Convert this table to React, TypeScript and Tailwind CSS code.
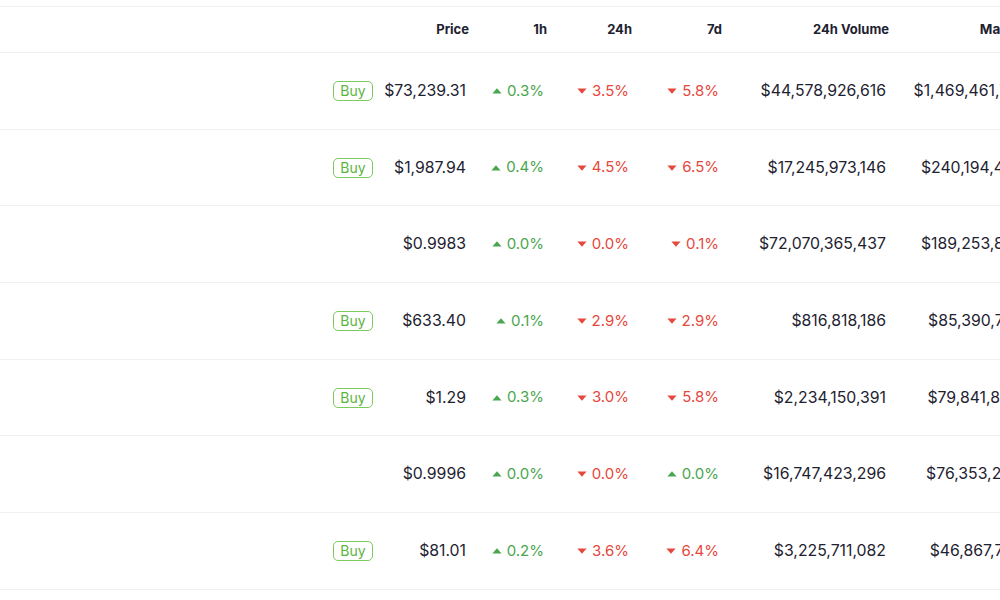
import React from "react";

type Change = { v: string; up: boolean };

const rows: {
  buy: boolean;
  price: string;
  h1: Change;
  h24: Change;
  d7: Change;
  volume: string;
  cap: string;
}[] = [
  { buy: true, price: "$73,239.31", h1: { v: "0.3%", up: true }, h24: { v: "3.5%", up: false }, d7: { v: "5.8%", up: false }, volume: "$44,578,926,616", cap: "$1,469,461,742,118" },
  { buy: true, price: "$1,987.94", h1: { v: "0.4%", up: true }, h24: { v: "4.5%", up: false }, d7: { v: "6.5%", up: false }, volume: "$17,245,973,146", cap: "$240,194,418,583" },
  { buy: false, price: "$0.9983", h1: { v: "0.0%", up: true }, h24: { v: "0.0%", up: false }, d7: { v: "0.1%", up: false }, volume: "$72,070,365,437", cap: "$189,253,810,476" },
  { buy: true, price: "$633.40", h1: { v: "0.1%", up: true }, h24: { v: "2.9%", up: false }, d7: { v: "2.9%", up: false }, volume: "$816,818,186", cap: "$85,390,726,415" },
  { buy: true, price: "$1.29", h1: { v: "0.3%", up: true }, h24: { v: "3.0%", up: false }, d7: { v: "5.8%", up: false }, volume: "$2,234,150,391", cap: "$79,841,852,963" },
  { buy: false, price: "$0.9996", h1: { v: "0.0%", up: true }, h24: { v: "0.0%", up: false }, d7: { v: "0.0%", up: true }, volume: "$16,747,423,296", cap: "$76,353,256,724" },
  { buy: true, price: "$81.01", h1: { v: "0.2%", up: true }, h24: { v: "3.6%", up: false }, d7: { v: "6.4%", up: false }, volume: "$3,225,711,082", cap: "$46,867,731,205" },
];

const Caret = ({ up }: { up: boolean }) => (
  <svg width="10" height="6" viewBox="0 0 10 6" className="mr-[5px]">
    {up ? (
      <path d="M5 0.3 L9.6 5.6 L0.4 5.6 Z" fill="#4aa64e" />
    ) : (
      <path d="M0.4 0.4 L9.6 0.4 L5 5.7 Z" fill="#e5483c" />
    )}
  </svg>
);

const Pct = ({ c }: { c: Change }) => (
  <span className={`inline-flex items-center ${c.up ? "text-[#4aa64e]" : "text-[#e5483c]"}`}>
    <Caret up={c.up} />
    {c.v}
  </span>
);

const App = () => {
  return (
    <div className="w-[1000px] h-[600px] overflow-hidden bg-white text-[#1e2230] font-['Inter',sans-serif]">
      <div className="w-[1100px] mt-[6px] border-t border-[#eff1f4]">
        {/* Header */}
        <div className="flex items-center h-[46px] border-b border-[#eff1f4] text-[13px] font-bold text-right whitespace-nowrap">
          <div className="w-[373px]" />
          <div className="w-[96px]">Price</div>
          <div className="w-[78px]">1h</div>
          <div className="w-[85px]">24h</div>
          <div className="w-[90px]">7d</div>
          <div className="w-[167px]">24h Volume</div>
          <div className="w-[167px] text-[13.5px]">Market Cap</div>
        </div>

        {/* Rows */}
        {rows.map((r, i) => (
          <div key={i} className="flex items-center h-[76.7px] border-b border-[#eff1f4] text-[15px] text-right whitespace-nowrap">
            <div className="w-[373px] flex justify-end">
              {r.buy && (
                <span className="inline-flex items-center justify-center w-[40px] h-[20px] rounded-[5px] border border-[#7cc95c] text-[#5cb53e] text-[14px] leading-none">
                  Buy
                </span>
              )}
            </div>
            <div className="w-[96px] pr-[3px] text-[15.8px]">{r.price}</div>
            <div className="w-[78px] pr-[3px] flex justify-end"><Pct c={r.h1} /></div>
            <div className="w-[85px] pr-[3px] flex justify-end"><Pct c={r.h24} /></div>
            <div className="w-[90px] pr-[3px] flex justify-end"><Pct c={r.d7} /></div>
            <div className="w-[167px] pr-[3px] text-[15.8px]">{r.volume}</div>
            <div className="w-[167px] pr-[3px] text-[15.8px]">{r.cap}</div>
          </div>
        ))}
      </div>
    </div>
  );
};

export default App;
